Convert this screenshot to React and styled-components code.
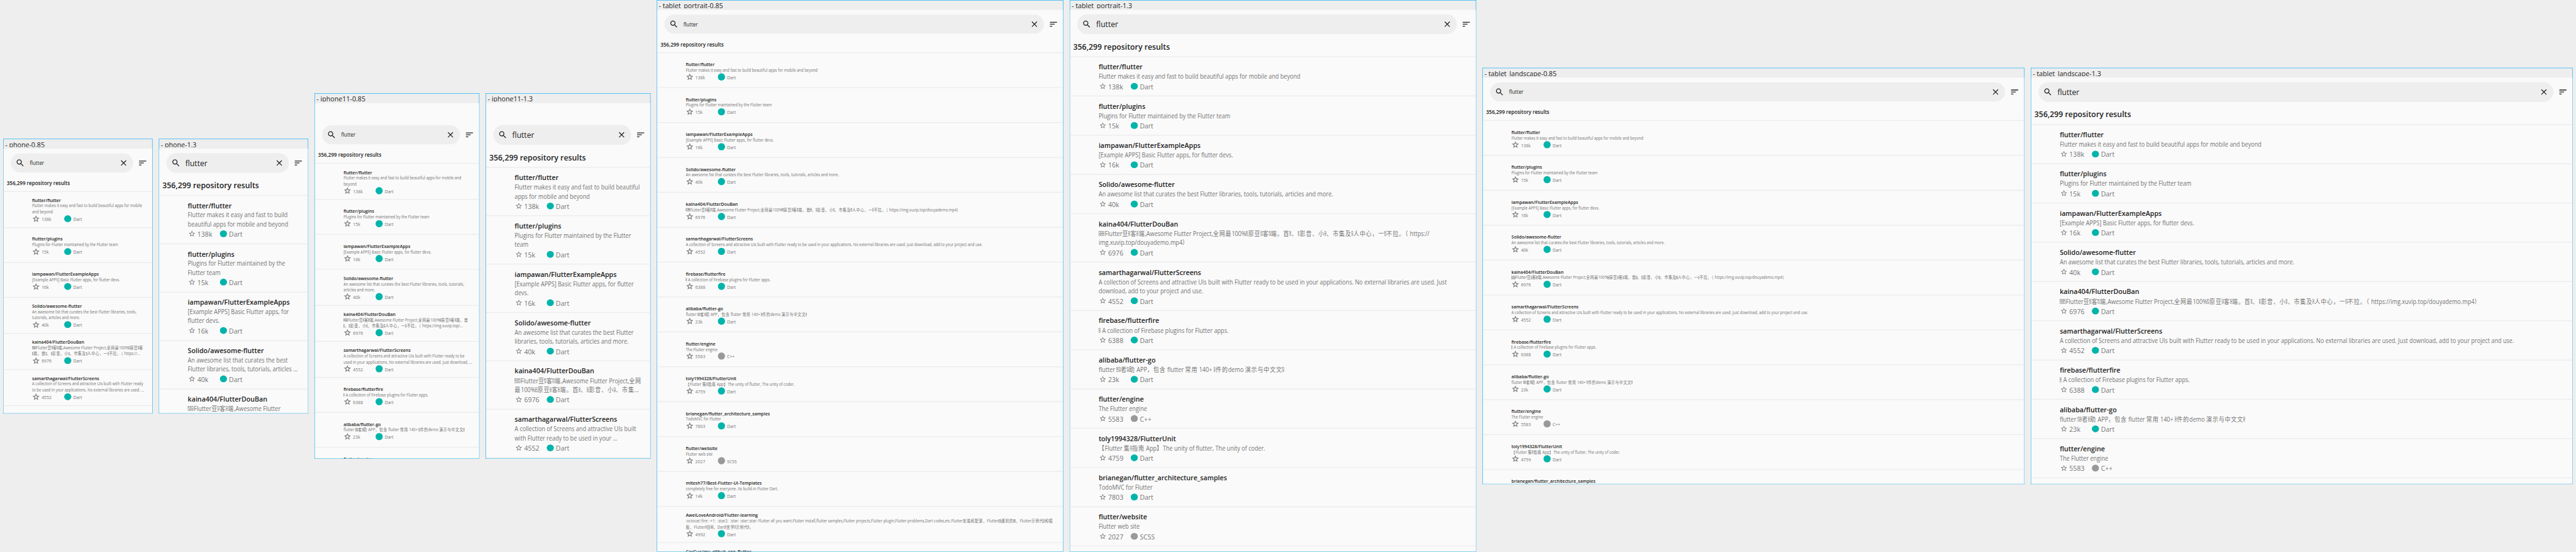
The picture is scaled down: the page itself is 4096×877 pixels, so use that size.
import React from 'react';
import styled, { createGlobalStyle } from 'styled-components';

const SCALE = 4096 / 6502;

const GlobalStyle = createGlobalStyle`
  html, body { margin: 0; background: #eeeeee; overflow: hidden; }
  *, *::before, *::after { box-sizing: border-box; }
`;

/* Metrics of the list for the small (0.85) and the large (1.3) text scale. */
const METRICS = {
  small: {
    input: 13.35, pill: 48,
    heading: 13.35, headingLine: 18, headingPad: 6, headingHeight: 37,
    title: 11.7, titleLine: 16, desc: 10.46, descLine: 15,
    meta: 11.5, metaLine: 19, star: 20, starWeight: 0.5,
    padOne: 19.5, padMany: 12.5, rowOne: 88, rowMany: 91,
  },
  large: {
    input: 20.4, pill: 50,
    heading: 20.4, headingLine: 27, headingPad: 7, headingHeight: 47,
    title: 17.85, titleLine: 25.5, desc: 16, descLine: 23,
    meta: 17.6, metaLine: 25, star: 19, starWeight: 0,
    padOne: 12.3, padMany: 12.3, rowOne: 99, rowMany: 122,
  },
};

const Viewport = styled.main`
  width: 4096px;
  height: 877px;
  overflow: hidden;
`;

const Board = styled.div`
  display: flex;
  align-items: center;
  gap: 16px;
  width: 6502px;
  height: 1392px;
  padding: 0 8px;
  transform: scale(${SCALE});
  transform-origin: 0 0;
  font-family: 'Open Sans', 'Noto Sans', 'Noto Sans CJK SC', sans-serif;
  color: #212121;
  white-space: pre;
`;

/* Text drawn slightly narrower than the font's regular width. */
const Narrow = styled.span`
  display: inline-block;
  transform: scaleX(${(p) => p.$x});
  transform-origin: 0 50%;
`;

const Frame = styled.section`
  flex: none;
  display: flex;
  flex-direction: column;
  width: ${(p) => p.$width + 2}px;
  border: 1px solid #03a9f4;
`;

const FrameLabel = styled.div`
  flex: none;
  height: 24px;
  padding: 4px;
`;

const FrameLabelText = styled.div`
  height: 16px;
  overflow: hidden;
  font-size: 17.6px;
  line-height: 18px;
`;

const Screen = styled.div`
  height: ${(p) => p.$height}px;
  padding-top: ${(p) => p.$inset || 0}px;
  overflow: hidden;
  background: #fafafa;
`;

const AppBar = styled.header`
  display: flex;
  align-items: center;
  gap: 12px;
  height: 72px;
  padding: 0 12px 0 18px;
`;

const SearchField = styled.div`
  flex: 1;
  display: flex;
  align-items: center;
  gap: 12px;
  height: ${(p) => p.$m.pill}px;
  padding: 0 12px;
  border-radius: 25px;
  background: #eeeeee;
`;

const Query = styled.span`
  flex: 1;
  font-size: ${(p) => p.$m.input}px;
  line-height: 28px;
`;

const Icon = styled.svg`
  flex: none;
  display: block;
  width: ${(p) => p.$size || 24}px;
  height: ${(p) => p.$size || 24}px;
  fill: currentColor;
`;

const Heading = styled.h1`
  height: ${(p) => p.$m.headingHeight}px;
  margin: 0;
  padding: ${(p) => p.$m.headingPad}px 8px 0;
  border-bottom: 2px solid #ebebeb;
  font-size: ${(p) => p.$m.heading}px;
  line-height: ${(p) => p.$m.headingLine}px;
  font-weight: 600;
`;

const Row = styled.article`
  height: ${(p) => (p.$many ? p.$m.rowMany : p.$m.rowOne)}px;
  padding: ${(p) => (p.$many ? p.$m.padMany : p.$m.padOne)}px 0 0 72px;
  border-bottom: 2px solid #ebebeb;
`;

const RepoName = styled.h2`
  height: ${(p) => p.$m.titleLine}px;
  margin: 0;
  font-size: ${(p) => p.$m.title}px;
  line-height: ${(p) => p.$m.titleLine}px;
  font-weight: 600;
`;

const Description = styled.p`
  margin: 0;
  font-size: ${(p) => p.$m.desc}px;
  line-height: ${(p) => p.$m.descLine}px;
  color: #757575;
`;

const Line = styled.span`
  display: block;
  height: ${(p) => p.$m.descLine}px;
`;

const Han = styled.span`
  font-family: 'Noto Sans CJK SC', sans-serif;
  font-size: 0.99em;
  letter-spacing: 0.095em;
  line-height: 0;
`;

const MissingGlyph = styled.span`
  display: inline-block;
  width: 0.3em;
  height: 0.76em;
  margin-right: 0.055em;
  border: 0.055em solid #8a8a8a;
  background: linear-gradient(72deg, transparent 40%, #8a8a8a 44%, #8a8a8a 56%, transparent 60%);
`;

const Meta = styled.div`
  display: flex;
  align-items: center;
  height: ${(p) => p.$m.metaLine}px;
  color: #757575;
`;

const MetaCell = styled.div`
  display: flex;
  align-items: center;
  gap: 4px;
  width: 80px;
`;

const IconSlot = styled.span`
  flex: none;
  display: flex;
  align-items: center;
  justify-content: center;
  width: 20px;
  height: 20px;
`;

const LanguageDot = styled.span`
  width: 17.4px;
  height: 17.4px;
  border-radius: 50%;
  background: ${(p) => p.$color};
`;

const MetaText = styled.span`
  padding-top: 2px;
  font-size: ${(p) => p.$m.meta}px;
  line-height: ${(p) => p.$m.metaLine - 2}px;
`;

const LANGUAGES = { Dart: '#00b4ab', 'C++': '#999999', SCSS: '#999999' };

const DOUBAN = '□□□Flutter豆□客□端,Awesome Flutter Project,全网最100%□原豆□客□端。首□、□影音、小□、市集及□人中心，一□不拉。（ https://img.xuvip.top/douyademo.mp4）';
const SCREENS = 'A collection of Screens and attractive UIs built with Flutter ready to be used in your applications. No external libraries are used. Just download, add to your project and use.';

/* Each repository: name, stars, language, description, and the line breaks of the narrower frames. */
const REPOS = [
  {
    name: 'flutter/flutter', stars: '138k', language: 'Dart',
    text: 'Flutter makes it easy and fast to build beautiful apps for mobile and beyond',
    lines: {
      'phone-0.85': ['Flutter makes it easy and fast to build beautiful apps for mobile', 'and beyond'],
      'phone-1.3': ['Flutter makes it easy and fast to build', 'beautiful apps for mobile and beyond'],
      'iphone11-0.85': ['Flutter makes it easy and fast to build beautiful apps for mobile and', 'beyond'],
      'iphone11-1.3': ['Flutter makes it easy and fast to build beautiful', 'apps for mobile and beyond'],
    },
  },
  {
    name: 'flutter/plugins', stars: '15k', language: 'Dart',
    text: 'Plugins for Flutter maintained by the Flutter team',
    lines: {
      'phone-1.3': ['Plugins for Flutter maintained by the', 'Flutter team'],
      'iphone11-1.3': ['Plugins for Flutter maintained by the Flutter', 'team'],
    },
  },
  {
    name: 'iampawan/FlutterExampleApps', stars: '16k', language: 'Dart',
    text: '[Example APPS] Basic Flutter apps, for flutter devs.',
    lines: {
      'phone-1.3': ['[Example APPS] Basic Flutter apps, for', 'flutter devs.'],
      'iphone11-1.3': ['[Example APPS] Basic Flutter apps, for flutter', 'devs.'],
    },
  },
  {
    name: 'Solido/awesome-flutter', stars: '40k', language: 'Dart',
    text: 'An awesome list that curates the best Flutter libraries, tools, tutorials, articles and more.',
    lines: {
      'phone-0.85': ['An awesome list that curates the best Flutter libraries, tools,', 'tutorials, articles and more.'],
      'phone-1.3': ['An awesome list that curates the best', 'Flutter libraries, tools, tutorials, articles ...'],
      'iphone11-0.85': ['An awesome list that curates the best Flutter libraries, tools, tutorials,', 'articles and more.'],
      'iphone11-1.3': ['An awesome list that curates the best Flutter', 'libraries, tools, tutorials, articles and more.'],
    },
  },
  {
    name: 'kaina404/FlutterDouBan', stars: '6976', language: 'Dart',
    text: DOUBAN,
    lines: {
      'phone-0.85': ['□□□Flutter豆□客□端,Awesome Flutter Project,全网最100%□原豆□客', '□端。首□、□影音、小□、市集及□人中心，一□不拉。（ https://...'],
      'phone-1.3': ['□□□Flutter豆□客□端,Awesome Flutter', 'Project,全网最100%□原豆□客□端。首□、...'],
      'iphone11-0.85': ['□□□Flutter豆□客□端,Awesome Flutter Project,全网最100%□原豆□客□端。首', '□、□影音、小□、市集及□人中心，一□不拉。（ https://img.xuvip.top/...'],
      'iphone11-1.3': ['□□□Flutter豆□客□端,Awesome Flutter Project,全网', '最100%□原豆□客□端。首□、□影音、小□、市集...'],
      'tablet_portrait-1.3': ['□□□Flutter豆□客□端,Awesome Flutter Project,全网最100%□原豆□客□端。首□、□影音、小□、市集及□人中心，一□不拉。（ https://', 'img.xuvip.top/douyademo.mp4）'],
    },
  },
  {
    name: 'samarthagarwal/FlutterScreens', stars: '4552', language: 'Dart',
    text: SCREENS,
    lines: {
      'phone-0.85': ['A collection of Screens and attractive UIs built with Flutter ready', 'to be used in your applications. No external libraries are used. ...'],
      'iphone11-0.85': ['A collection of Screens and attractive UIs built with Flutter ready to be', 'used in your applications. No external libraries are used. Just download, ...'],
      'iphone11-1.3': ['A collection of Screens and attractive UIs built', 'with Flutter ready to be used in your ...'],
      'tablet_portrait-1.3': ['A collection of Screens and attractive UIs built with Flutter ready to be used in your applications. No external libraries are used. Just', 'download, add to your project and use.'],
    },
  },
  { name: 'firebase/flutterfire', stars: '6388', language: 'Dart', text: '□ A collection of Firebase plugins for Flutter apps.' },
  { name: 'alibaba/flutter-go', stars: '23k', language: 'Dart', text: 'flutter □□者□助 APP，包含 flutter 常用 140+ □件的demo 演示与中文文□' },
  { name: 'flutter/engine', stars: '5583', language: 'C++', text: 'The Flutter engine' },
  { name: 'toly1994328/FlutterUnit', stars: '4759', language: 'Dart', text: '【Flutter 集□指南 App】The unity of flutter, The unity of coder.' },
  { name: 'brianegan/flutter_architecture_samples', stars: '7803', language: 'Dart', text: 'TodoMVC for Flutter' },
  { name: 'flutter/website', stars: '2027', language: 'SCSS', text: 'Flutter web site' },
  { name: 'mitesh77/Best-Flutter-UI-Templates', stars: '14k', language: 'Dart', text: 'completely free for everyone. Its build-in Flutter Dart.' },
  {
    name: 'AweiLoveAndroid/Flutter-learning', stars: '4992', language: 'Dart',
    text: '',
    lines: {
      'tablet_portrait-0.85': [
        ':octocat::fire: :+1:  :star2:  :star: :star::star: Flutter all you want.Flutter install,flutter samples,Flutter projects,Flutter plugin,Flutter problems,Dart codes,etc.Flutter安装和配置，Flutter□□遇到的□□，Flutter示例代□和模',
        '板，Flutter□目□□，Dart□言学□示例代□。',
      ],
    },
  },
  { name: 'CarGuo/gsy_github_app_flutter', stars: '', language: '', text: '', tall: true },
];

const FRAMES = [
  { name: 'phone-0.85', scale: 'small', width: 375, height: 667, count: 6 },
  { name: 'phone-1.3', scale: 'large', width: 375, height: 667, count: 5 },
  { name: 'iphone11-0.85', scale: 'small', width: 414, height: 896, inset: 44, count: 9 },
  { name: 'iphone11-1.3', scale: 'large', width: 414, height: 896, inset: 44, count: 6 },
  { name: 'tablet_portrait-0.85', scale: 'small', width: 1024, height: 1366, count: 15 },
  { name: 'tablet_portrait-1.3', scale: 'large', width: 1024, height: 1366, count: 12 },
  { name: 'tablet_landscape-0.85', scale: 'small', width: 1366, height: 1024, count: 11 },
  { name: 'tablet_landscape-1.3', scale: 'large', width: 1366, height: 1024, count: 9 },
];

function RichText({ children }) {
  const runs = children.match(/□|[\u3000-\u9fff\uff00-\uffef]+|[^□\u3000-\u9fff\uff00-\uffef]+/g) || [];
  return runs.map((run, i) => {
    if (run === '□') return <MissingGlyph key={i} />;
    if (/[\u3000-\u9fff\uff00-\uffef]/.test(run)) return <Han key={i}>{run}</Han>;
    return run;
  });
}

function Repo({ repo, frame, m }) {
  const lines = (repo.lines && repo.lines[frame]) || [repo.text];
  return (
    <Row $m={m} $many={repo.tall || lines.length > 1}>
      <RepoName $m={m}><Narrow $x={0.949}>{repo.name}</Narrow></RepoName>
      <Description $m={m}>
        {lines.map((line) => (
          <Line key={line} $m={m}>
            <Narrow $x={0.903}><RichText>{line}</RichText></Narrow>
          </Line>
        ))}
      </Description>
      {repo.language && (
        <Meta $m={m}>
          <MetaCell>
            <IconSlot>
              <Icon $size={m.star} viewBox="0 0 24 24" stroke="currentColor" strokeWidth={m.starWeight}>
                <path d="M22 9.24l-7.19-.62L12 2 9.19 8.63 2 9.24l5.46 4.73L5.82 21 12 17.27 18.18 21l-1.63-7.03L22 9.24zM12 15.4l-3.76 2.27 1-4.28-3.32-2.88 4.38-.38L12 6.1l1.71 4.04 4.38.38-3.32 2.88 1 4.28L12 15.4z" />
              </Icon>
            </IconSlot>
            <MetaText $m={m}><Narrow $x={0.955}>{repo.stars}</Narrow></MetaText>
          </MetaCell>
          <MetaCell>
            <IconSlot><LanguageDot $color={LANGUAGES[repo.language]} /></IconSlot>
            <MetaText $m={m}><Narrow $x={0.945}>{repo.language}</Narrow></MetaText>
          </MetaCell>
        </Meta>
      )}
    </Row>
  );
}

function Device({ frame }) {
  const m = METRICS[frame.scale];
  return (
    <Frame $width={frame.width}>
      <FrameLabel><FrameLabelText><Narrow $x={0.963}>{`- ${frame.name}`}</Narrow></FrameLabelText></FrameLabel>
      <Screen $height={frame.height} $inset={frame.inset}>
        <AppBar>
          <SearchField $m={m}>
            <Icon viewBox="0 0 24 24">
              <path d="M15.5 14h-.79l-.28-.27C15.41 12.59 16 11.11 16 9.5 16 5.91 13.09 3 9.5 3S3 5.91 3 9.5 5.91 16 9.5 16c1.61 0 3.09-.59 4.23-1.57l.27.28v.79l5 4.99L20.49 19l-4.99-5zm-6 0C7.01 14 5 11.99 5 9.5S7.01 5 9.5 5 14 7.01 14 9.5 11.99 14 9.5 14z" />
            </Icon>
            <Query $m={m}><Narrow $x={0.94}>flutter</Narrow></Query>
            <Icon viewBox="0 0 24 24">
              <path d="M19 6.41L17.59 5 12 10.59 6.41 5 5 6.41 10.59 12 5 17.59 6.41 19 12 13.41 17.59 19 19 17.59 13.41 12z" />
            </Icon>
          </SearchField>
          <Icon viewBox="0 0 24 24">
            <path d="M3 18h6v-2H3v2zM3 6v2h18V6H3zm0 7h12v-2H3v2z" />
          </Icon>
        </AppBar>
        <Heading $m={m}><Narrow $x={0.957}>356,299 repository results</Narrow></Heading>
        {REPOS.slice(0, frame.count).map((repo) => (
          <Repo key={repo.name} repo={repo} frame={frame.name} m={m} />
        ))}
      </Screen>
    </Frame>
  );
}

export default function App() {
  return (
    <>
      <GlobalStyle />
      <Viewport>
        <Board>
          {FRAMES.map((frame) => <Device key={frame.name} frame={frame} />)}
        </Board>
      </Viewport>
    </>
  );
}
